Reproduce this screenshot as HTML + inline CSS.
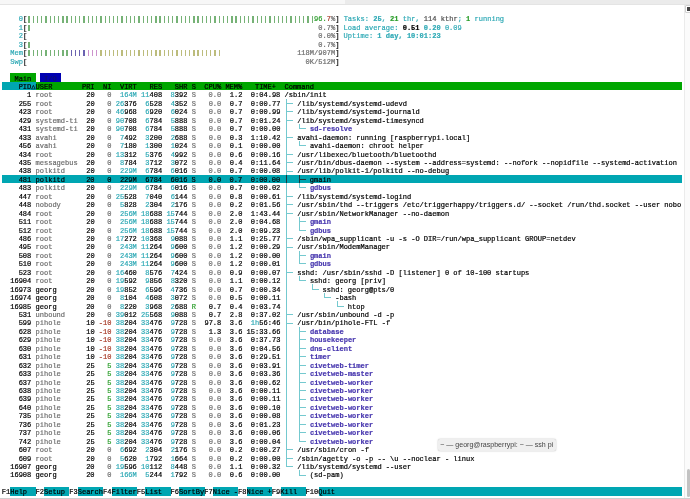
<!DOCTYPE html>
<html><head><meta charset="utf-8"><style>
html,body{will-change:transform;margin:0;padding:0;background:#fff;width:690px;height:499px;overflow:hidden;position:relative}
.top{position:absolute;left:0;top:0;width:690px;height:4.4px;background:linear-gradient(to right,#f7f7f7 0,#f7f7f7 345px,#ebebeb 345.5px,#ebebeb 690px);border-bottom:0.6px solid #e4e4e4}
.bg{position:absolute}
.tl{position:absolute;background:#74c9cf}
.bar{position:absolute;width:1.3px;height:6.3px}
.ln{position:absolute;-webkit-text-stroke:0.2px currentColor;left:1.75px;height:8.445px;line-height:8.445px;font-family:"Liberation Mono",monospace;font-size:7.04px;white-space:pre;color:#000}
.s0{color:#30aab6}
.s1{color:#2a9e2a}
.s2{color:#a83c2a}
.s3{color:#6e6e6e}
.s4{color:#30aab6;font-weight:bold}
.s5{color:#2a9e2a;font-weight:bold}
.s6{color:#505050}
.s7{color:#000000;font-weight:bold}
.s8{color:#10106a}
.s9{color:#4a3ab0;font-weight:bold}
.sb{position:absolute;left:684.2px;top:4.8px;width:5.8px;height:494.2px;background:#fbfbfb;border-left:0.6px solid #ebebeb}
.ico{position:absolute;left:684.6px;top:5px;width:6px;height:8.4px;background:#fff;border:0.6px solid #d0d0d0;border-radius:1px;box-sizing:border-box}
.ico2{position:absolute;left:686.8px;top:6.7px;width:3.2px;height:4.6px;background:#444}
.thumb{position:absolute;left:687px;top:469px;width:3px;height:27.5px;background:#c2c2c2;border-radius:1.5px}
.bot{position:absolute;left:0;top:497.8px;width:690px;height:1.2px;background:#cfcfcf}
.tip{position:absolute;left:437.7px;top:439.1px;width:118px;height:11.6px;background:#efefef;border-radius:2px;box-shadow:0 0 1.5px rgba(0,0,0,0.35);font-family:"Liberation Sans",sans-serif;font-size:7.05px;line-height:11.6px;color:#444;white-space:pre;text-align:center}
</style></head><body>
<div class="top"></div>
<div class="sb"></div>
<div class="thumb"></div>
<div class="ico"></div><div class="ico2"></div>
<div class="bg" style="left:10.20px;top:73.41px;width:25.35px;height:8.25px;background:#00a600"></div>
<div class="bg" style="left:39.77px;top:73.41px;width:21.12px;height:8.25px;background:#0000b2"></div>
<div class="bg" style="left:1.75px;top:81.86px;width:680.22px;height:8.25px;background:#00a600"></div>
<div class="bg" style="left:1.75px;top:81.86px;width:33.80px;height:8.25px;background:#00a6b2"></div>
<div class="bg" style="left:1.75px;top:174.75px;width:680.22px;height:8.25px;background:#00a6b2"></div>
<div class="bg" style="left:10.20px;top:487.27px;width:25.35px;height:8.55px;background:#00a6b2"></div>
<div class="bg" style="left:44.00px;top:487.27px;width:25.35px;height:8.55px;background:#00a6b2"></div>
<div class="bg" style="left:77.80px;top:487.27px;width:25.35px;height:8.55px;background:#00a6b2"></div>
<div class="bg" style="left:111.60px;top:487.27px;width:25.35px;height:8.55px;background:#00a6b2"></div>
<div class="bg" style="left:145.40px;top:487.27px;width:25.35px;height:8.55px;background:#00a6b2"></div>
<div class="bg" style="left:179.20px;top:487.27px;width:25.35px;height:8.55px;background:#00a6b2"></div>
<div class="bg" style="left:213.00px;top:487.27px;width:25.35px;height:8.55px;background:#00a6b2"></div>
<div class="bg" style="left:246.80px;top:487.27px;width:25.35px;height:8.55px;background:#00a6b2"></div>
<div class="bg" style="left:280.60px;top:487.27px;width:25.35px;height:8.55px;background:#00a6b2"></div>
<div class="bg" style="left:318.62px;top:487.27px;width:363.35px;height:8.55px;background:#00a6b2"></div>
<div class="tl" style="left:286.44px;top:98.65px;width:1.00px;height:8.45px"></div>
<div class="tl" style="left:286.44px;top:102.96px;width:6.84px;height:1.00px"></div>
<div class="tl" style="left:286.44px;top:107.10px;width:1.00px;height:8.45px"></div>
<div class="tl" style="left:286.44px;top:111.41px;width:6.84px;height:1.00px"></div>
<div class="tl" style="left:286.44px;top:115.54px;width:1.00px;height:8.45px"></div>
<div class="tl" style="left:286.44px;top:119.85px;width:6.84px;height:1.00px"></div>
<div class="tl" style="left:286.44px;top:123.98px;width:1.00px;height:8.45px"></div>
<div class="tl" style="left:299.11px;top:123.98px;width:1.00px;height:5.31px"></div>
<div class="tl" style="left:299.11px;top:128.30px;width:6.84px;height:1.00px"></div>
<div class="tl" style="left:286.44px;top:132.43px;width:1.00px;height:8.45px"></div>
<div class="tl" style="left:286.44px;top:136.74px;width:6.84px;height:1.00px"></div>
<div class="tl" style="left:286.44px;top:140.88px;width:1.00px;height:8.45px"></div>
<div class="tl" style="left:299.11px;top:140.88px;width:1.00px;height:5.31px"></div>
<div class="tl" style="left:299.11px;top:145.19px;width:6.84px;height:1.00px"></div>
<div class="tl" style="left:286.44px;top:149.32px;width:1.00px;height:8.45px"></div>
<div class="tl" style="left:286.44px;top:153.63px;width:6.84px;height:1.00px"></div>
<div class="tl" style="left:286.44px;top:157.76px;width:1.00px;height:8.45px"></div>
<div class="tl" style="left:286.44px;top:162.08px;width:6.84px;height:1.00px"></div>
<div class="tl" style="left:286.44px;top:166.21px;width:1.00px;height:8.45px"></div>
<div class="tl" style="left:286.44px;top:170.52px;width:6.84px;height:1.00px"></div>
<div class="tl" style="left:286.44px;top:174.66px;width:1.00px;height:8.45px;background:#1a3a3e"></div>
<div class="tl" style="left:299.11px;top:174.66px;width:1.00px;height:8.45px;background:#1a3a3e"></div>
<div class="tl" style="left:299.11px;top:178.97px;width:6.84px;height:1.00px;background:#1a3a3e"></div>
<div class="tl" style="left:286.44px;top:183.10px;width:1.00px;height:8.45px"></div>
<div class="tl" style="left:299.11px;top:183.10px;width:1.00px;height:5.31px"></div>
<div class="tl" style="left:299.11px;top:187.41px;width:6.84px;height:1.00px"></div>
<div class="tl" style="left:286.44px;top:191.54px;width:1.00px;height:8.45px"></div>
<div class="tl" style="left:286.44px;top:195.86px;width:6.84px;height:1.00px"></div>
<div class="tl" style="left:286.44px;top:199.99px;width:1.00px;height:8.45px"></div>
<div class="tl" style="left:286.44px;top:204.30px;width:6.84px;height:1.00px"></div>
<div class="tl" style="left:286.44px;top:208.44px;width:1.00px;height:8.45px"></div>
<div class="tl" style="left:286.44px;top:212.75px;width:6.84px;height:1.00px"></div>
<div class="tl" style="left:286.44px;top:216.88px;width:1.00px;height:8.45px"></div>
<div class="tl" style="left:299.11px;top:216.88px;width:1.00px;height:8.45px"></div>
<div class="tl" style="left:299.11px;top:221.19px;width:6.84px;height:1.00px"></div>
<div class="tl" style="left:286.44px;top:225.32px;width:1.00px;height:8.45px"></div>
<div class="tl" style="left:299.11px;top:225.32px;width:1.00px;height:5.31px"></div>
<div class="tl" style="left:299.11px;top:229.64px;width:6.84px;height:1.00px"></div>
<div class="tl" style="left:286.44px;top:233.77px;width:1.00px;height:8.45px"></div>
<div class="tl" style="left:286.44px;top:238.08px;width:6.84px;height:1.00px"></div>
<div class="tl" style="left:286.44px;top:242.22px;width:1.00px;height:8.45px"></div>
<div class="tl" style="left:286.44px;top:246.53px;width:6.84px;height:1.00px"></div>
<div class="tl" style="left:286.44px;top:250.66px;width:1.00px;height:8.45px"></div>
<div class="tl" style="left:299.11px;top:250.66px;width:1.00px;height:8.45px"></div>
<div class="tl" style="left:299.11px;top:254.97px;width:6.84px;height:1.00px"></div>
<div class="tl" style="left:286.44px;top:259.11px;width:1.00px;height:8.45px"></div>
<div class="tl" style="left:299.11px;top:259.11px;width:1.00px;height:5.31px"></div>
<div class="tl" style="left:299.11px;top:263.42px;width:6.84px;height:1.00px"></div>
<div class="tl" style="left:286.44px;top:267.55px;width:1.00px;height:8.45px"></div>
<div class="tl" style="left:286.44px;top:271.86px;width:6.84px;height:1.00px"></div>
<div class="tl" style="left:286.44px;top:276.00px;width:1.00px;height:8.45px"></div>
<div class="tl" style="left:299.11px;top:276.00px;width:1.00px;height:5.31px"></div>
<div class="tl" style="left:299.11px;top:280.31px;width:6.84px;height:1.00px"></div>
<div class="tl" style="left:286.44px;top:284.44px;width:1.00px;height:8.45px"></div>
<div class="tl" style="left:311.79px;top:284.44px;width:1.00px;height:5.31px"></div>
<div class="tl" style="left:311.79px;top:288.75px;width:6.84px;height:1.00px"></div>
<div class="tl" style="left:286.44px;top:292.88px;width:1.00px;height:8.45px"></div>
<div class="tl" style="left:324.46px;top:292.88px;width:1.00px;height:5.31px"></div>
<div class="tl" style="left:324.46px;top:297.20px;width:6.84px;height:1.00px"></div>
<div class="tl" style="left:286.44px;top:301.33px;width:1.00px;height:8.45px"></div>
<div class="tl" style="left:337.14px;top:301.33px;width:1.00px;height:5.31px"></div>
<div class="tl" style="left:337.14px;top:305.64px;width:6.84px;height:1.00px"></div>
<div class="tl" style="left:286.44px;top:309.77px;width:1.00px;height:8.45px"></div>
<div class="tl" style="left:286.44px;top:314.09px;width:6.84px;height:1.00px"></div>
<div class="tl" style="left:286.44px;top:318.22px;width:1.00px;height:8.45px"></div>
<div class="tl" style="left:286.44px;top:322.53px;width:6.84px;height:1.00px"></div>
<div class="tl" style="left:286.44px;top:326.67px;width:1.00px;height:8.45px"></div>
<div class="tl" style="left:299.11px;top:326.67px;width:1.00px;height:8.45px"></div>
<div class="tl" style="left:299.11px;top:330.98px;width:6.84px;height:1.00px"></div>
<div class="tl" style="left:286.44px;top:335.11px;width:1.00px;height:8.45px"></div>
<div class="tl" style="left:299.11px;top:335.11px;width:1.00px;height:8.45px"></div>
<div class="tl" style="left:299.11px;top:339.42px;width:6.84px;height:1.00px"></div>
<div class="tl" style="left:286.44px;top:343.56px;width:1.00px;height:8.45px"></div>
<div class="tl" style="left:299.11px;top:343.56px;width:1.00px;height:8.45px"></div>
<div class="tl" style="left:299.11px;top:347.87px;width:6.84px;height:1.00px"></div>
<div class="tl" style="left:286.44px;top:352.00px;width:1.00px;height:8.45px"></div>
<div class="tl" style="left:299.11px;top:352.00px;width:1.00px;height:8.45px"></div>
<div class="tl" style="left:299.11px;top:356.31px;width:6.84px;height:1.00px"></div>
<div class="tl" style="left:286.44px;top:360.44px;width:1.00px;height:8.45px"></div>
<div class="tl" style="left:299.11px;top:360.44px;width:1.00px;height:8.45px"></div>
<div class="tl" style="left:299.11px;top:364.76px;width:6.84px;height:1.00px"></div>
<div class="tl" style="left:286.44px;top:368.89px;width:1.00px;height:8.45px"></div>
<div class="tl" style="left:299.11px;top:368.89px;width:1.00px;height:8.45px"></div>
<div class="tl" style="left:299.11px;top:373.20px;width:6.84px;height:1.00px"></div>
<div class="tl" style="left:286.44px;top:377.33px;width:1.00px;height:8.45px"></div>
<div class="tl" style="left:299.11px;top:377.33px;width:1.00px;height:8.45px"></div>
<div class="tl" style="left:299.11px;top:381.65px;width:6.84px;height:1.00px"></div>
<div class="tl" style="left:286.44px;top:385.78px;width:1.00px;height:8.45px"></div>
<div class="tl" style="left:299.11px;top:385.78px;width:1.00px;height:8.45px"></div>
<div class="tl" style="left:299.11px;top:390.09px;width:6.84px;height:1.00px"></div>
<div class="tl" style="left:286.44px;top:394.23px;width:1.00px;height:8.45px"></div>
<div class="tl" style="left:299.11px;top:394.23px;width:1.00px;height:8.45px"></div>
<div class="tl" style="left:299.11px;top:398.54px;width:6.84px;height:1.00px"></div>
<div class="tl" style="left:286.44px;top:402.67px;width:1.00px;height:8.45px"></div>
<div class="tl" style="left:299.11px;top:402.67px;width:1.00px;height:8.45px"></div>
<div class="tl" style="left:299.11px;top:406.98px;width:6.84px;height:1.00px"></div>
<div class="tl" style="left:286.44px;top:411.12px;width:1.00px;height:8.45px"></div>
<div class="tl" style="left:299.11px;top:411.12px;width:1.00px;height:8.45px"></div>
<div class="tl" style="left:299.11px;top:415.43px;width:6.84px;height:1.00px"></div>
<div class="tl" style="left:286.44px;top:419.56px;width:1.00px;height:8.45px"></div>
<div class="tl" style="left:299.11px;top:419.56px;width:1.00px;height:8.45px"></div>
<div class="tl" style="left:299.11px;top:423.87px;width:6.84px;height:1.00px"></div>
<div class="tl" style="left:286.44px;top:428.00px;width:1.00px;height:8.45px"></div>
<div class="tl" style="left:299.11px;top:428.00px;width:1.00px;height:8.45px"></div>
<div class="tl" style="left:299.11px;top:432.32px;width:6.84px;height:1.00px"></div>
<div class="tl" style="left:286.44px;top:436.45px;width:1.00px;height:8.45px"></div>
<div class="tl" style="left:299.11px;top:436.45px;width:1.00px;height:5.31px"></div>
<div class="tl" style="left:299.11px;top:440.76px;width:6.84px;height:1.00px"></div>
<div class="tl" style="left:286.44px;top:444.89px;width:1.00px;height:8.45px"></div>
<div class="tl" style="left:286.44px;top:449.21px;width:6.84px;height:1.00px"></div>
<div class="tl" style="left:286.44px;top:453.34px;width:1.00px;height:8.45px"></div>
<div class="tl" style="left:286.44px;top:457.65px;width:6.84px;height:1.00px"></div>
<div class="tl" style="left:286.44px;top:461.79px;width:1.00px;height:5.31px"></div>
<div class="tl" style="left:286.44px;top:466.10px;width:6.84px;height:1.00px"></div>
<div class="tl" style="left:299.11px;top:470.23px;width:1.00px;height:5.31px"></div>
<div class="tl" style="left:299.11px;top:474.54px;width:6.84px;height:1.00px"></div>
<div class="bar" style="left:28.46px;top:16.30px;background:#76b276"></div>
<div class="bar" style="left:32.69px;top:16.30px;background:#76b276"></div>
<div class="bar" style="left:36.91px;top:16.30px;background:#76b276"></div>
<div class="bar" style="left:41.14px;top:16.30px;background:#76b276"></div>
<div class="bar" style="left:45.36px;top:16.30px;background:#76b276"></div>
<div class="bar" style="left:49.59px;top:16.30px;background:#76b276"></div>
<div class="bar" style="left:53.81px;top:16.30px;background:#76b276"></div>
<div class="bar" style="left:58.04px;top:16.30px;background:#76b276"></div>
<div class="bar" style="left:62.26px;top:16.30px;background:#76b276"></div>
<div class="bar" style="left:66.49px;top:16.30px;background:#76b276"></div>
<div class="bar" style="left:70.71px;top:16.30px;background:#76b276"></div>
<div class="bar" style="left:74.94px;top:16.30px;background:#76b276"></div>
<div class="bar" style="left:79.16px;top:16.30px;background:#76b276"></div>
<div class="bar" style="left:83.39px;top:16.30px;background:#76b276"></div>
<div class="bar" style="left:87.61px;top:16.30px;background:#76b276"></div>
<div class="bar" style="left:91.84px;top:16.30px;background:#76b276"></div>
<div class="bar" style="left:96.06px;top:16.30px;background:#76b276"></div>
<div class="bar" style="left:100.29px;top:16.30px;background:#76b276"></div>
<div class="bar" style="left:104.51px;top:16.30px;background:#76b276"></div>
<div class="bar" style="left:108.74px;top:16.30px;background:#76b276"></div>
<div class="bar" style="left:112.96px;top:16.30px;background:#76b276"></div>
<div class="bar" style="left:117.19px;top:16.30px;background:#76b276"></div>
<div class="bar" style="left:121.41px;top:16.30px;background:#76b276"></div>
<div class="bar" style="left:125.64px;top:16.30px;background:#76b276"></div>
<div class="bar" style="left:129.86px;top:16.30px;background:#76b276"></div>
<div class="bar" style="left:134.09px;top:16.30px;background:#76b276"></div>
<div class="bar" style="left:138.31px;top:16.30px;background:#76b276"></div>
<div class="bar" style="left:142.54px;top:16.30px;background:#76b276"></div>
<div class="bar" style="left:146.76px;top:16.30px;background:#76b276"></div>
<div class="bar" style="left:150.99px;top:16.30px;background:#76b276"></div>
<div class="bar" style="left:155.21px;top:16.30px;background:#76b276"></div>
<div class="bar" style="left:159.44px;top:16.30px;background:#76b276"></div>
<div class="bar" style="left:163.66px;top:16.30px;background:#76b276"></div>
<div class="bar" style="left:167.89px;top:16.30px;background:#76b276"></div>
<div class="bar" style="left:172.11px;top:16.30px;background:#76b276"></div>
<div class="bar" style="left:176.34px;top:16.30px;background:#76b276"></div>
<div class="bar" style="left:180.56px;top:16.30px;background:#76b276"></div>
<div class="bar" style="left:184.79px;top:16.30px;background:#76b276"></div>
<div class="bar" style="left:189.01px;top:16.30px;background:#76b276"></div>
<div class="bar" style="left:193.24px;top:16.30px;background:#76b276"></div>
<div class="bar" style="left:197.46px;top:16.30px;background:#76b276"></div>
<div class="bar" style="left:201.69px;top:16.30px;background:#76b276"></div>
<div class="bar" style="left:205.91px;top:16.30px;background:#76b276"></div>
<div class="bar" style="left:210.14px;top:16.30px;background:#76b276"></div>
<div class="bar" style="left:214.36px;top:16.30px;background:#76b276"></div>
<div class="bar" style="left:218.59px;top:16.30px;background:#76b276"></div>
<div class="bar" style="left:222.81px;top:16.30px;background:#76b276"></div>
<div class="bar" style="left:227.04px;top:16.30px;background:#76b276"></div>
<div class="bar" style="left:231.26px;top:16.30px;background:#76b276"></div>
<div class="bar" style="left:235.49px;top:16.30px;background:#76b276"></div>
<div class="bar" style="left:239.71px;top:16.30px;background:#76b276"></div>
<div class="bar" style="left:243.94px;top:16.30px;background:#76b276"></div>
<div class="bar" style="left:248.16px;top:16.30px;background:#76b276"></div>
<div class="bar" style="left:252.39px;top:16.30px;background:#76b276"></div>
<div class="bar" style="left:256.61px;top:16.30px;background:#76b276"></div>
<div class="bar" style="left:260.84px;top:16.30px;background:#76b276"></div>
<div class="bar" style="left:265.06px;top:16.30px;background:#76b276"></div>
<div class="bar" style="left:269.29px;top:16.30px;background:#76b276"></div>
<div class="bar" style="left:273.51px;top:16.30px;background:#76b276"></div>
<div class="bar" style="left:277.74px;top:16.30px;background:#76b276"></div>
<div class="bar" style="left:281.96px;top:16.30px;background:#76b276"></div>
<div class="bar" style="left:286.19px;top:16.30px;background:#76b276"></div>
<div class="bar" style="left:290.41px;top:16.30px;background:#76b276"></div>
<div class="bar" style="left:294.64px;top:16.30px;background:#76b276"></div>
<div class="bar" style="left:298.86px;top:16.30px;background:#76b276"></div>
<div class="bar" style="left:303.09px;top:16.30px;background:#76b276"></div>
<div class="bar" style="left:307.31px;top:16.30px;background:#76b276"></div>
<div class="bar" style="left:311.54px;top:16.30px;background:#76b276"></div>
<div class="bar" style="left:28.46px;top:24.75px;background:#76b276"></div>
<div class="bar" style="left:28.46px;top:41.63px;background:#76b276"></div>
<div class="bar" style="left:28.46px;top:50.08px;background:#76b276"></div>
<div class="bar" style="left:32.69px;top:50.08px;background:#76b276"></div>
<div class="bar" style="left:36.91px;top:50.08px;background:#76b276"></div>
<div class="bar" style="left:41.14px;top:50.08px;background:#76b276"></div>
<div class="bar" style="left:45.36px;top:50.08px;background:#76b276"></div>
<div class="bar" style="left:49.59px;top:50.08px;background:#76b276"></div>
<div class="bar" style="left:53.81px;top:50.08px;background:#76b276"></div>
<div class="bar" style="left:58.04px;top:50.08px;background:#76b276"></div>
<div class="bar" style="left:62.26px;top:50.08px;background:#76b276"></div>
<div class="bar" style="left:66.49px;top:50.08px;background:#76b276"></div>
<div class="bar" style="left:70.71px;top:50.08px;background:#6a62b0"></div>
<div class="bar" style="left:74.94px;top:50.08px;background:#6a62b0"></div>
<div class="bar" style="left:79.16px;top:50.08px;background:#6a62b0"></div>
<div class="bar" style="left:83.39px;top:50.08px;background:#6a62b0"></div>
<div class="bar" style="left:87.61px;top:50.08px;background:#cc92cc"></div>
<div class="bar" style="left:91.84px;top:50.08px;background:#cc92cc"></div>
<div class="bar" style="left:96.06px;top:50.08px;background:#cc92cc"></div>
<div class="bar" style="left:100.29px;top:50.08px;background:#bcbc7c"></div>
<div class="bar" style="left:104.51px;top:50.08px;background:#bcbc7c"></div>
<div class="bar" style="left:108.74px;top:50.08px;background:#bcbc7c"></div>
<div class="bar" style="left:112.96px;top:50.08px;background:#bcbc7c"></div>
<div class="bar" style="left:117.19px;top:50.08px;background:#bcbc7c"></div>
<div class="bar" style="left:121.41px;top:50.08px;background:#bcbc7c"></div>
<div class="bar" style="left:125.64px;top:50.08px;background:#bcbc7c"></div>
<div class="bar" style="left:129.86px;top:50.08px;background:#bcbc7c"></div>
<div class="bar" style="left:134.09px;top:50.08px;background:#bcbc7c"></div>
<div class="bar" style="left:138.31px;top:50.08px;background:#bcbc7c"></div>
<div class="bar" style="left:142.54px;top:50.08px;background:#bcbc7c"></div>
<div class="bar" style="left:146.76px;top:50.08px;background:#bcbc7c"></div>
<div class="bar" style="left:150.99px;top:50.08px;background:#bcbc7c"></div>
<div class="bar" style="left:155.21px;top:50.08px;background:#bcbc7c"></div>
<div class="bar" style="left:159.44px;top:50.08px;background:#bcbc7c"></div>
<div class="bar" style="left:163.66px;top:50.08px;background:#bcbc7c"></div>
<div class="bar" style="left:167.89px;top:50.08px;background:#bcbc7c"></div>
<div class="bar" style="left:172.11px;top:50.08px;background:#bcbc7c"></div>
<div class="bar" style="left:176.34px;top:50.08px;background:#bcbc7c"></div>
<div class="bar" style="left:180.56px;top:50.08px;background:#bcbc7c"></div>
<div class="bar" style="left:184.79px;top:50.08px;background:#bcbc7c"></div>
<div class="bar" style="left:189.01px;top:50.08px;background:#bcbc7c"></div>
<div class="bar" style="left:193.24px;top:50.08px;background:#bcbc7c"></div>
<div class="bar" style="left:197.46px;top:50.08px;background:#bcbc7c"></div>
<div class="bar" style="left:201.69px;top:50.08px;background:#bcbc7c"></div>
<div class="bar" style="left:205.91px;top:50.08px;background:#bcbc7c"></div>
<div class="bar" style="left:210.14px;top:50.08px;background:#bcbc7c"></div>
<div class="bar" style="left:214.36px;top:50.08px;background:#bcbc7c"></div>
<div class="bar" style="left:218.59px;top:50.08px;background:#bcbc7c"></div>
<div class="ln" style="top:15.450px">    <span class="s0">0</span>[                                                                    <span class="s1">96.</span><span class="s2">7</span><span class="s3">%</span>] <span class="s0">Tasks: </span><span class="s4">25</span><span class="s0">, </span><span class="s5">21 </span><span class="s0">thr, </span><span class="s6">114 kthr</span><span class="s0">; </span><span class="s5">1 </span><span class="s0">running</span></div>
<div class="ln" style="top:23.895px">    <span class="s0">1</span>[                                                                     <span class="s3">0.7%</span>] <span class="s0">Load average: </span><span class="s7">0.51 </span><span class="s4">0.20 </span><span class="s0">0.09</span></div>
<div class="ln" style="top:32.340px">    <span class="s0">2</span>[                                                                     <span class="s3">0.0%</span>] <span class="s0">Uptime: </span><span class="s4">1 day, 10:01:23</span></div>
<div class="ln" style="top:40.785px">    <span class="s0">3</span>[                                                                     <span class="s3">0.7%</span>]</div>
<div class="ln" style="top:49.230px">  <span class="s0">Mem</span>[                                                                <span class="s3">118M/907M</span>]</div>
<div class="ln" style="top:57.675px">  <span class="s0">Swp</span>[                                                                  <span class="s3">0K/512M</span>]</div>
<div class="ln" style="top:74.565px">   Main   <span class="s8">I/O</span></div>
<div class="ln" style="top:83.010px">    PID△USER       PRI  NI  VIRT   RES   SHR S  CPU% MEM%   TIME+  Command</div>
<div class="ln" style="top:91.455px">      1 <span class="s3">root        </span>20   <span class="s3">0  </span><span class="s0">164M 11</span>408  <span class="s0">8</span>392 <span class="s3">S   0.0  </span>1.2  0:04.98 /sbin/init</div>
<div class="ln" style="top:99.900px">    255 <span class="s3">root        </span>20   <span class="s3">0 </span><span class="s0">26</span>376  <span class="s0">6</span>528  <span class="s0">4</span>352 <span class="s3">S   0.0  </span>0.7  0:00.77    /lib/systemd/systemd-udevd</div>
<div class="ln" style="top:108.345px">    423 <span class="s3">root        </span>20   <span class="s3">0 </span><span class="s0">46</span>968  <span class="s0">6</span>920  <span class="s0">6</span>024 <span class="s3">S   0.0  </span>0.7  0:00.99    /lib/systemd/systemd-journald</div>
<div class="ln" style="top:116.790px">    429 <span class="s3">systemd-ti  </span>20   <span class="s3">0 </span><span class="s0">90</span>708  <span class="s0">6</span>784  <span class="s0">5</span>888 <span class="s3">S   0.0  </span>0.7  0:01.24    /lib/systemd/systemd-timesyncd</div>
<div class="ln" style="top:125.235px">    431 <span class="s3">systemd-ti  </span>20   <span class="s3">0 </span><span class="s0">90</span>708  <span class="s0">6</span>784  <span class="s0">5</span>888 <span class="s3">S   0.0  </span>0.7  0:00.00       <span class="s9">sd-resolve</span></div>
<div class="ln" style="top:133.680px">    433 <span class="s3">avahi       </span>20   <span class="s3">0  </span><span class="s0">7</span>492  <span class="s0">3</span>200  <span class="s0">2</span>688 <span class="s3">S   0.0  </span>0.3  1:10.42    avahi-daemon: running [raspberrypi.local]</div>
<div class="ln" style="top:142.125px">    456 <span class="s3">avahi       </span>20   <span class="s3">0  </span><span class="s0">7</span>180  <span class="s0">1</span>300  <span class="s0">1</span>024 <span class="s3">S   0.0  </span>0.1  0:00.00       avahi-daemon: chroot helper</div>
<div class="ln" style="top:150.570px">    434 <span class="s3">root        </span>20   <span class="s3">0 </span><span class="s0">13</span>312  <span class="s0">5</span>376  <span class="s0">4</span>992 <span class="s3">S   0.0  </span>0.6  0:00.16    /usr/libexec/bluetooth/bluetoothd</div>
<div class="ln" style="top:159.015px">    435 <span class="s3">messagebus  </span>20   <span class="s3">0  </span><span class="s0">8</span>784  <span class="s0">3</span>712  <span class="s0">3</span>072 <span class="s3">S   0.0  </span>0.4  0:11.64    /usr/bin/dbus-daemon --system --address=systemd: --nofork --nopidfile --systemd-activation</div>
<div class="ln" style="top:167.460px">    438 <span class="s3">polkitd     </span>20   <span class="s3">0  </span><span class="s0">229M  6</span>784  <span class="s0">6</span>016 <span class="s3">S   0.0  </span>0.7  0:00.08    /usr/lib/polkit-1/polkitd --no-debug</div>
<div class="ln" style="top:175.905px">    481 polkitd     20   0  229M  6784  6016 S   0.0  0.7  0:00.00       gmain</div>
<div class="ln" style="top:184.350px">    483 <span class="s3">polkitd     </span>20   <span class="s3">0  </span><span class="s0">229M  6</span>784  <span class="s0">6</span>016 <span class="s3">S   0.0  </span>0.7  0:00.02       <span class="s9">gdbus</span></div>
<div class="ln" style="top:192.795px">    447 <span class="s3">root        </span>20   <span class="s3">0 </span><span class="s0">25</span>528  <span class="s0">7</span>040  <span class="s0">6</span>144 <span class="s3">S   0.0  </span>0.8  0:00.61    /lib/systemd/systemd-logind</div>
<div class="ln" style="top:201.240px">    448 <span class="s3">nobody      </span>20   <span class="s3">0  </span><span class="s0">5</span>828  <span class="s0">2</span>304  <span class="s0">2</span>176 <span class="s3">S   0.0  </span>0.2  0:01.56    /usr/sbin/thd --triggers /etc/triggerhappy/triggers.d/ --socket /run/thd.socket --user nobo</div>
<div class="ln" style="top:209.685px">    484 <span class="s3">root        </span>20   <span class="s3">0  </span><span class="s0">256M 18</span>688 <span class="s0">15</span>744 <span class="s3">S   0.0  </span>2.0  1:43.44    /usr/sbin/NetworkManager --no-daemon</div>
<div class="ln" style="top:218.130px">    511 <span class="s3">root        </span>20   <span class="s3">0  </span><span class="s0">256M 18</span>688 <span class="s0">15</span>744 <span class="s3">S   0.0  </span>2.0  0:04.68       <span class="s9">gmain</span></div>
<div class="ln" style="top:226.575px">    512 <span class="s3">root        </span>20   <span class="s3">0  </span><span class="s0">256M 18</span>688 <span class="s0">15</span>744 <span class="s3">S   0.0  </span>2.0  0:09.23       <span class="s9">gdbus</span></div>
<div class="ln" style="top:235.020px">    486 <span class="s3">root        </span>20   <span class="s3">0 </span><span class="s0">17</span>272 <span class="s0">10</span>368  <span class="s0">9</span>088 <span class="s3">S   0.0  </span>1.1  0:25.77    /sbin/wpa_supplicant -u -s -O DIR=/run/wpa_supplicant GROUP=netdev</div>
<div class="ln" style="top:243.465px">    495 <span class="s3">root        </span>20   <span class="s3">0  </span><span class="s0">243M 11</span>264  <span class="s0">9</span>600 <span class="s3">S   0.0  </span>1.2  0:00.29    /usr/sbin/ModemManager</div>
<div class="ln" style="top:251.910px">    508 <span class="s3">root        </span>20   <span class="s3">0  </span><span class="s0">243M 11</span>264  <span class="s0">9</span>600 <span class="s3">S   0.0  </span>1.2  0:00.00       <span class="s9">gmain</span></div>
<div class="ln" style="top:260.355px">    510 <span class="s3">root        </span>20   <span class="s3">0  </span><span class="s0">243M 11</span>264  <span class="s0">9</span>600 <span class="s3">S   0.0  </span>1.2  0:00.01       <span class="s9">gdbus</span></div>
<div class="ln" style="top:268.800px">    523 <span class="s3">root        </span>20   <span class="s3">0 </span><span class="s0">16</span>460  <span class="s0">8</span>576  <span class="s0">7</span>424 <span class="s3">S   0.0  </span>0.9  0:00.07    sshd: /usr/sbin/sshd -D [listener] 0 of 10-100 startups</div>
<div class="ln" style="top:277.245px">  16904 <span class="s3">root        </span>20   <span class="s3">0 </span><span class="s0">19</span>592  <span class="s0">9</span>856  <span class="s0">8</span>320 <span class="s3">S   0.0  </span>1.1  0:00.12       sshd: georg [priv]</div>
<div class="ln" style="top:285.690px">  16973 georg       20   <span class="s3">0 </span><span class="s0">19</span>852  <span class="s0">6</span>596  <span class="s0">4</span>736 <span class="s3">S   0.0  </span>0.7  0:00.34          sshd: georg@pts/0</div>
<div class="ln" style="top:294.135px">  16974 georg       20   <span class="s3">0  </span><span class="s0">8</span>104  <span class="s0">4</span>608  <span class="s0">3</span>072 <span class="s3">S   0.0  </span>0.5  0:00.11             -bash</div>
<div class="ln" style="top:302.580px">  16985 georg       20   <span class="s3">0  </span><span class="s0">8</span>220  <span class="s0">3</span>968  <span class="s0">2</span>688 <span class="s1">R   </span>0.7  0.4  0:03.74                htop</div>
<div class="ln" style="top:311.025px">    531 <span class="s3">unbound     </span>20   <span class="s3">0 </span><span class="s0">39</span>012 <span class="s0">25</span>568  <span class="s0">9</span>088 <span class="s3">S   </span>0.7  2.8  0:37.02    /usr/sbin/unbound -d -p</div>
<div class="ln" style="top:319.470px">    599 <span class="s3">pihole      </span>10 <span class="s2">-10 </span><span class="s0">38</span>204 <span class="s0">33</span>476  <span class="s0">9</span>728 <span class="s3">S  </span>97.8  3.6  <span class="s0">1h</span>56:46    /usr/bin/pihole-FTL -f</div>
<div class="ln" style="top:327.915px">    628 <span class="s3">pihole      </span>10 <span class="s2">-10 </span><span class="s0">38</span>204 <span class="s0">33</span>476  <span class="s0">9</span>728 <span class="s3">S   </span>1.3  3.6 15:33.66       <span class="s9">database</span></div>
<div class="ln" style="top:336.360px">    629 <span class="s3">pihole      </span>10 <span class="s2">-10 </span><span class="s0">38</span>204 <span class="s0">33</span>476  <span class="s0">9</span>728 <span class="s3">S   0.0  </span>3.6  0:37.73       <span class="s9">housekeeper</span></div>
<div class="ln" style="top:344.805px">    630 <span class="s3">pihole      </span>10 <span class="s2">-10 </span><span class="s0">38</span>204 <span class="s0">33</span>476  <span class="s0">9</span>728 <span class="s3">S   0.0  </span>3.6  0:04.56       <span class="s9">dns-client</span></div>
<div class="ln" style="top:353.250px">    631 <span class="s3">pihole      </span>10 <span class="s2">-10 </span><span class="s0">38</span>204 <span class="s0">33</span>476  <span class="s0">9</span>728 <span class="s3">S   0.0  </span>3.6  0:29.51       <span class="s9">timer</span></div>
<div class="ln" style="top:361.695px">    632 <span class="s3">pihole      </span>25   <span class="s1">5 </span><span class="s0">38</span>204 <span class="s0">33</span>476  <span class="s0">9</span>728 <span class="s3">S   0.0  </span>3.6  0:03.91       <span class="s9">civetweb-timer</span></div>
<div class="ln" style="top:370.140px">    633 <span class="s3">pihole      </span>25   <span class="s1">5 </span><span class="s0">38</span>204 <span class="s0">33</span>476  <span class="s0">9</span>728 <span class="s3">S   0.0  </span>3.6  0:03.36       <span class="s9">civetweb-master</span></div>
<div class="ln" style="top:378.585px">    637 <span class="s3">pihole      </span>25   <span class="s1">5 </span><span class="s0">38</span>204 <span class="s0">33</span>476  <span class="s0">9</span>728 <span class="s3">S   0.0  </span>3.6  0:00.62       <span class="s9">civetweb-worker</span></div>
<div class="ln" style="top:387.030px">    638 <span class="s3">pihole      </span>25   <span class="s1">5 </span><span class="s0">38</span>204 <span class="s0">33</span>476  <span class="s0">9</span>728 <span class="s3">S   0.0  </span>3.6  0:00.11       <span class="s9">civetweb-worker</span></div>
<div class="ln" style="top:395.475px">    639 <span class="s3">pihole      </span>25   <span class="s1">5 </span><span class="s0">38</span>204 <span class="s0">33</span>476  <span class="s0">9</span>728 <span class="s3">S   0.0  </span>3.6  0:00.11       <span class="s9">civetweb-worker</span></div>
<div class="ln" style="top:403.920px">    640 <span class="s3">pihole      </span>25   <span class="s1">5 </span><span class="s0">38</span>204 <span class="s0">33</span>476  <span class="s0">9</span>728 <span class="s3">S   0.0  </span>3.6  0:00.10       <span class="s9">civetweb-worker</span></div>
<div class="ln" style="top:412.365px">    735 <span class="s3">pihole      </span>25   <span class="s1">5 </span><span class="s0">38</span>204 <span class="s0">33</span>476  <span class="s0">9</span>728 <span class="s3">S   0.0  </span>3.6  0:00.08       <span class="s9">civetweb-worker</span></div>
<div class="ln" style="top:420.810px">    736 <span class="s3">pihole      </span>25   <span class="s1">5 </span><span class="s0">38</span>204 <span class="s0">33</span>476  <span class="s0">9</span>728 <span class="s3">S   0.0  </span>3.6  0:01.23       <span class="s9">civetweb-worker</span></div>
<div class="ln" style="top:429.255px">    737 <span class="s3">pihole      </span>25   <span class="s1">5 </span><span class="s0">38</span>204 <span class="s0">33</span>476  <span class="s0">9</span>728 <span class="s3">S   0.0  </span>3.6  0:00.06       <span class="s9">civetweb-worker</span></div>
<div class="ln" style="top:437.700px">    742 <span class="s3">pihole      </span>25   <span class="s1">5 </span><span class="s0">38</span>204 <span class="s0">33</span>476  <span class="s0">9</span>728 <span class="s3">S   0.0  </span>3.6  0:00.04       <span class="s9">civetweb-worker</span></div>
<div class="ln" style="top:446.145px">    607 <span class="s3">root        </span>20   <span class="s3">0  </span><span class="s0">6</span>692  <span class="s0">2</span>304  <span class="s0">2</span>176 <span class="s3">S   0.0  </span>0.2  0:00.27    /usr/sbin/cron -f</div>
<div class="ln" style="top:454.590px">    609 <span class="s3">root        </span>20   <span class="s3">0  </span><span class="s0">5</span>620  <span class="s0">1</span>792  <span class="s0">1</span>664 <span class="s3">S   0.0  </span>0.2  0:00.00    /sbin/agetty -o -p -- \u --noclear - linux</div>
<div class="ln" style="top:463.035px">  16907 georg       20   <span class="s3">0 </span><span class="s0">19</span>596 <span class="s0">10</span>112  <span class="s0">8</span>448 <span class="s3">S   0.0  </span>1.1  0:00.32    /lib/systemd/systemd --user</div>
<div class="ln" style="top:471.480px">  16908 georg       20   <span class="s3">0  </span><span class="s0">166M  5</span>244  <span class="s0">1</span>792 <span class="s3">S   0.0  </span>0.6  0:00.00       (sd-pam)</div>
<div class="ln" style="top:488.370px">F1Help  F2Setup F3SearchF4FilterF5List  F6SortByF7Nice -F8Nice +F9Kill  F10Quit</div>
<div class="tip">~ — georg@raspberrypi: ~ — ssh pi</div>
<div class="bot"></div>
</body></html>
